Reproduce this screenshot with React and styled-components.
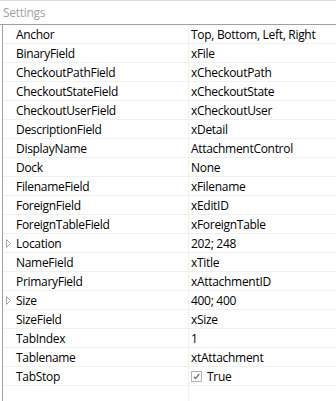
import React from 'react'
import styled, { createGlobalStyle } from 'styled-components'

const GlobalStyle = createGlobalStyle`
  html, body {
    margin: 0;
    padding: 0;
    background: #ffffff;
  }
  body {
    font-family: "Open Sans", "Noto Sans", sans-serif;
    font-size: 12px;
    letter-spacing: -0.3px;
  }
`

const Panel = styled.div`
  width: 336px;
  height: 401px;
  box-sizing: border-box;
  display: flex;
  flex-direction: column;
  background: #ffffff;
  border-top: 1px solid #dadada;
  overflow: hidden;
`

const Title = styled.div`
  height: 23px;
  flex: none;
  display: flex;
  align-items: center;
  padding-left: 3px;
  color: #a3a3a3;
  font-size: 12px;
  border-bottom: 1px solid #a0a0a0;
`

const Grid = styled.div`
  flex: 1;
  display: flex;
  flex-direction: column;
  margin-left: 2px;
  border-left: 1px solid #a0a0a0;
`

const Row = styled.div`
  display: grid;
  grid-template-columns: 186px 1fr;
  height: 19px;
  box-sizing: border-box;
  border-bottom: 1px solid #f0f0f0;
  color: #000000;
`

const Filler = styled.div`
  flex: 1;
  display: grid;
  grid-template-columns: 186px 1fr;
`

const NameCell = styled.div`
  position: relative;
  display: flex;
  align-items: center;
  padding-left: 13px;
  border-right: 1px solid #f0f0f0;
  white-space: nowrap;
`

const ValueCell = styled.div`
  display: flex;
  align-items: center;
  padding-left: 2px;
  white-space: nowrap;
  overflow: hidden;
`

const Expander = styled.svg`
  position: absolute;
  left: 2px;
  top: 5px;
`

const Check = styled.span`
  width: 11px;
  height: 11px;
  box-sizing: border-box;
  border: 1px solid #b4b4b4;
  display: flex;
  align-items: center;
  justify-content: center;
  margin-right: 5px;
  background: #fbfbfb;
`

const props = [
  ['Anchor', 'Top, Bottom, Left, Right'],
  ['BinaryField', 'xFile'],
  ['CheckoutPathField', 'xCheckoutPath'],
  ['CheckoutStateField', 'xCheckoutState'],
  ['CheckoutUserField', 'xCheckoutUser'],
  ['DescriptionField', 'xDetail'],
  ['DisplayName', 'AttachmentControl'],
  ['Dock', 'None'],
  ['FilenameField', 'xFilename'],
  ['ForeignField', 'xEditID'],
  ['ForeignTableField', 'xForeignTable'],
  ['Location', '202; 248', true],
  ['NameField', 'xTitle'],
  ['PrimaryField', 'xAttachmentID'],
  ['Size', '400; 400', true],
  ['SizeField', 'xSize'],
  ['TabIndex', '1'],
  ['Tablename', 'xtAttachment'],
  ['TabStop', 'True', false, true],
]

function Arrow() {
  return (
    <Expander width="7" height="9" viewBox="0 0 7 9">
      <polygon points="1.5,0.5 5.5,4.5 1.5,8.5" fill="none" stroke="#a6a6a6" strokeWidth="1" />
    </Expander>
  )
}

function CheckMark() {
  return (
    <Check>
      <svg width="7" height="7" viewBox="0 0 7 7">
        <polyline points="0.8,3.8 2.6,5.6 6.2,1" fill="none" stroke="#6e6e6e" strokeWidth="1.3" />
      </svg>
    </Check>
  )
}

export default function App() {
  return (
    <>
      <GlobalStyle />
      <Panel>
        <Title>Settings</Title>
        <Grid>
          {props.map(([name, value, expandable, checkbox]) => (
            <Row key={name}>
              <NameCell>
                {expandable && <Arrow />}
                {name}
              </NameCell>
              <ValueCell>
                {checkbox && <CheckMark />}
                {value}
              </ValueCell>
            </Row>
          ))}
          <Filler>
            <NameCell />
            <ValueCell />
          </Filler>
        </Grid>
      </Panel>
    </>
  )
}
